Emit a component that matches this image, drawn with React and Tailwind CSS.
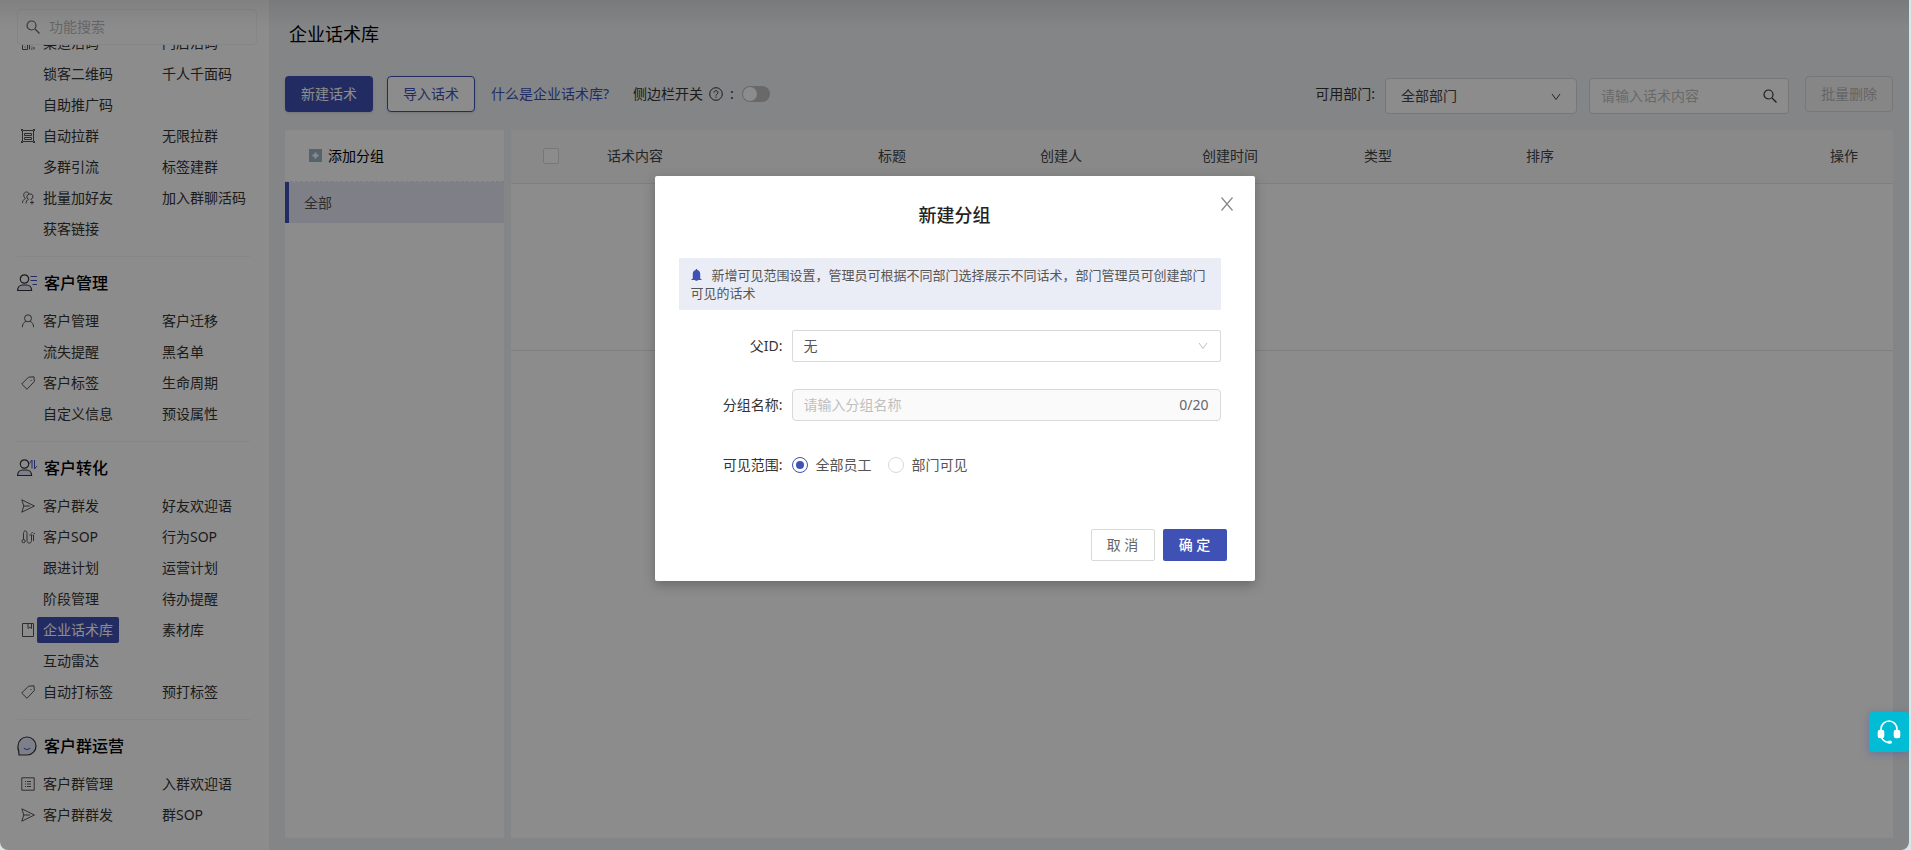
import { useState } from 'react';

// ── Sidebar data: each row is [icon, left link, right link] ──
const SECTIONS = [
  {
    title: null,
    rows: [
      ['qr', '渠道活码', '门店活码'],
      [null, '锁客二维码', '千人千面码'],
      [null, '自助推广码', null],
      ['frame', '自动拉群', '无限拉群'],
      [null, '多群引流', '标签建群'],
      ['addUser', '批量加好友', '加入群聊活码'],
      [null, '获客链接', null],
    ],
  },
  {
    title: '客户管理',
    icon: 'userList',
    rows: [
      ['user', '客户管理', '客户迁移'],
      [null, '流失提醒', '黑名单'],
      ['tag', '客户标签', '生命周期'],
      [null, '自定义信息', '预设属性'],
    ],
  },
  {
    title: '客户转化',
    icon: 'userSwap',
    rows: [
      ['send', '客户群发', '好友欢迎语'],
      ['route', '客户SOP', '行为SOP'],
      [null, '跟进计划', '运营计划'],
      [null, '阶段管理', '待办提醒'],
      ['book', '企业话术库', '素材库'],
      [null, '互动雷达', null],
      ['tag', '自动打标签', '预打标签'],
    ],
  },
  {
    title: '客户群运营',
    icon: 'chat',
    rows: [
      ['list', '客户群管理', '入群欢迎语'],
      ['send', '客户群群发', '群SOP'],
    ],
  },
];

const ACTIVE = '企业话术库';

const ROW_ICONS = {
  qr: <path d="M1.500 1.500h4v4h-4zM8.500 1.500h4v4h-4zM1.500 8.500h5v5h-5zM3.500 11h1M8.500 8v5.500M10.500 8.500h2.500M10.500 11h1M13 11v2.500M10 13h1.500" />,
  frame: <path d="M1.500 1.500h11v11h-11zM0 .5h2M12 .5h2M0 13.500h2M12 13.500h2M.5 0v2M13.500 0v2M.5 12v2M13.500 12v2M3.500 4.500h7v2h-7zM3.500 8.500h7v2h-7z" />,
  addUser: <path d="M4.500 7.500C2 6 2 1 5.500 1 7 1 8 2 8 3M4.500 7.500C2.500 8.500 1.500 10 1.500 12M8.500 3a2.700 2.700 0 0 1 1.500 5.200M8.500 3a2.700 2.700 0 0 0-1 5.200C6 9 5 10.500 5 12.500M10 8.200v.8M11 9.500v4M9 11.500h4" />,
  user: <path d="M7 .8a3.500 3.500 0 1 0 0 7 3.500 3.500 0 0 0 0-7zM5 7.400C2.800 8.200 1.400 10 1.400 13.200M9 7.400c2.200.8 3.600 2.600 3.600 5.800" />,
  tag: <path d="M.7 8 7.500 1.200 13 .8l.3 4.700L6 13.300zM9.500 4.500h1" />,
  send: <path d="M.8.8 13.400 7 .8 13.200 2.800 7zM2.800 7H9" />,
  route: <path d="M2.500 9.500a1.600 1.600 0 1 0 .1 3.200 1.600 1.600 0 0 0 0-3.200zM2.500 9.500v-6c0-3.500 3.500-3.500 3.500 0v7c0 3.500 4.500 3.500 4.500 0V5M8.500 5h3M12.500 5v6M10.500 3.500 11.500 2M12.500 4l1.500-.8" />,
  book: <path d="M1.500.5h11v13h-11zM7 .5v5l1.700-1.300L10.500 5.500v-5" />,
  list: <path d="M.8.800h12.400v12.400H.8zM4 4.500h1M6 4.500h4M4 7h1M6 7h4M4 9.500h1M6 9.500h4" />,
};

function RowIcon({ name }) {
  if (!name) return <span />;
  return (
    <svg className="w-3.5 h-3.5 text-[#555]" viewBox="0 0 14 14" fill="none" stroke="currentColor" aria-hidden="true">
      {ROW_ICONS[name]}
    </svg>
  );
}

function SectionIcon({ name }) {
  return (
    <svg className="w-5 h-5" viewBox="0 0 20 20" fill="none" stroke="#333" strokeWidth="1.200" aria-hidden="true">
      {name === 'chat' ? (
        <>
          <path d="M1 10a9 9 0 1 1 9 9H2l-.3-4A9 9 0 0 1 1 10z" fill="#e4e7fb" />
          <path d="M7 12c1.500 2 4.500 2 6 0" stroke="#3f51b5" />
        </>
      ) : (
        <>
          <circle cx="7.500" cy="6" r="4.200" />
          <path d="M.6 17.500c0-3.500 2.400-5.500 5-5.500h4c2.600 0 5 2 5 5.500z" fill="#e4e7fb" />
          {name === 'userList' ? (
            <path d="M13.500 3.500H20M13.500 7.500H20M15.500 11.500H20" stroke="#3f51b5" />
          ) : (
            <path d="M12.500 5.500 15 2v8.500M17.500 2v9l2.500-3" stroke="#3f51b5" strokeWidth="1" />
          )}
        </>
      )}
    </svg>
  );
}

function SearchIcon({ className }) {
  return (
    <svg className={className} viewBox="0 0 14 14" fill="none" stroke="currentColor" strokeWidth="1.200" aria-hidden="true">
      <circle cx="5.500" cy="5.500" r="4.500" />
      <path d="M9 9l4.500 4.500" />
    </svg>
  );
}

function Chevron({ className }) {
  return (
    <svg className={className} viewBox="0 0 10 10" fill="none" stroke="currentColor" aria-hidden="true">
      <path d="M1 2l4 5.500L9 2" />
    </svg>
  );
}

function NavLink({ label }) {
  if (!label) return <span />;
  return (
    <a
      href="#"
      className={`justify-self-start px-1.5 leading-[26px] rounded-xs whitespace-nowrap ${label === ACTIVE ? 'bg-[#3f51b5] text-white' : 'text-[#333]'}`}
    >
      {label}
    </a>
  );
}

function Sidebar() {
  return (
    <aside className="isolate w-[269px] shrink-0 bg-white flex flex-col overflow-hidden">
      <div className="relative z-10 pt-[9px] pl-[17px] pr-3">
        <label className="flex items-center h-9 px-2 gap-[9px] rounded border border-[#f3f3f3] bg-white text-[#666]">
          <SearchIcon className="w-3.5 h-3.5 shrink-0" />
          <input
            type="text"
            aria-label="功能搜索"
            placeholder="功能搜索"
            className="min-w-0 flex-1 text-sm outline-none placeholder:text-[#bbb]"
          />
        </label>
      </div>

      {/* list is scrolled a little under the search box */}
      <nav className="-mt-[18px] text-sm">
        {SECTIONS.map((s, i) => (
          <div key={i}>
            {s.title && (
              <>
                <div className="ml-[17px] mr-[19px] border-t border-[#f5f5f5]" />
                <h2 className="mt-2.5 mb-1.5 h-8 pl-[17px] flex items-center gap-[7px] text-base font-medium text-black">
                  <SectionIcon name={s.icon} />
                  {s.title}
                </h2>
              </>
            )}
            <div className="pb-3">
              {s.rows.map(([icon, a, b]) => (
                <div key={a} className="grid grid-cols-[16px_119px_1fr] items-center h-[31px] pl-[21px]">
                  <RowIcon name={icon} />
                  <NavLink label={a} />
                  <NavLink label={b} />
                </div>
              ))}
            </div>
          </div>
        ))}
      </nav>
    </aside>
  );
}

function Toolbar() {
  return (
    <div className="flex items-center h-9 text-sm text-[#333]">
      <button className="w-[88px] h-9 rounded bg-[#3f51b5] text-white shadow-sm">新建话术</button>
      <button className="w-[88px] h-9 ml-3.5 rounded bg-white border border-[#3f51b5] text-[#3f51b5] shadow-sm">导入话术</button>
      <a href="#" className="ml-4 text-[#3f51b5]">什么是企业话术库?</a>
      <span className="ml-6">侧边栏开关</span>
      <svg className="w-3.5 h-3.5 ml-1.5" viewBox="0 0 14 14" fill="none" stroke="currentColor" aria-hidden="true">
        <circle cx="7" cy="7" r="6.300" />
        <path d="M5 5.600c0-2.600 4-2.600 4 0C9 7 7 7 7 8.600M7 9.600v1.200" />
      </svg>
      <span className="ml-[7px]">:</span>
      <button role="switch" aria-checked="false" aria-label="侧边栏开关" className="w-7 h-4 ml-2 p-px rounded-full bg-[#bfbfbf]">
        <span className="block w-3.5 h-3.5 rounded-full bg-white" />
      </button>

      <div className="ml-auto flex items-center">
        <label htmlFor="dept">可用部门:</label>
        <div className="relative ml-2.5 mt-1">
          <select id="dept" className="appearance-none w-48 h-9 pl-[15px] rounded bg-white border border-[#d9d9d9] text-[#444]">
            <option>全部部门</option>
          </select>
          <Chevron className="absolute right-4 top-[14px] w-2.5 h-2.5 text-[#444] pointer-events-none" />
        </div>
        <label className="flex items-center w-[200px] h-9 ml-3 mt-1 px-[11px] rounded bg-white border border-[#d9d9d9]">
          <input
            type="text"
            aria-label="请输入话术内容"
            placeholder="请输入话术内容"
            className="min-w-0 flex-1 outline-none placeholder:text-[#bfbfbf]"
          />
          <SearchIcon className="w-3.5 h-3.5" />
        </label>
        <button disabled className="w-[88px] h-9 ml-4 rounded bg-[#f5f5f5] border border-[#d9d9d9] text-[#b8b8b8]">批量删除</button>
      </div>
    </div>
  );
}

function GroupPanel() {
  return (
    <section className="w-[219px] shrink-0 bg-white text-sm">
      <button className="flex items-center w-full h-[52px] pl-6 gap-1.5 border-b border-dashed border-[#e8e8e8] text-black">
        <svg className="w-[13px] h-[13px]" viewBox="0 0 13 13" aria-hidden="true">
          <rect width="13" height="13" fill="#9db4c4" />
          <path d="M6.500 3.500v6M3.500 6.500h6" stroke="#fff" strokeWidth="2" />
        </svg>
        添加分组
      </button>
      <button className="flex items-center w-full h-[41px] pl-[15px] bg-[#e8eaf6] border-l-4 border-[#3f51b5] text-[#555]">全部</button>
    </section>
  );
}

function ScriptTable() {
  return (
    <section className="flex-1 bg-white">
      <table className="w-full table-fixed text-sm text-[#444]">
        <thead>
          <tr className="h-[53px] bg-[#fafafa] border-b border-[#e8e8e8] text-left">
            <th className="w-20 pl-8">
              <input type="checkbox" aria-label="全选" className="block appearance-none w-4 h-4 rounded-xs border border-[#d9d9d9] bg-white" />
            </th>
            <th className="pl-4 font-normal">话术内容</th>
            <th className="w-[162px] pl-4 font-normal">标题</th>
            <th className="w-[162px] pl-4 font-normal">创建人</th>
            <th className="w-[162px] pl-4 font-normal">创建时间</th>
            <th className="w-[162px] pl-4 font-normal">类型</th>
            <th className="w-[162px] pl-4 font-normal">排序</th>
            <th className="w-[221px] pr-[35px] text-right font-normal">操作</th>
          </tr>
        </thead>
        <tbody>
          <tr className="h-[167px] border-b border-[#e8e8e8]">
            <td colSpan={8} />
          </tr>
        </tbody>
      </table>
    </section>
  );
}

function Radio({ label, value, current, onChange }) {
  return (
    <label className="flex items-center gap-2">
      <input
        type="radio"
        name="scope"
        checked={current === value}
        onChange={() => onChange(value)}
        className="appearance-none w-4 h-4 rounded-full border border-[#d9d9d9] checked:border-[#3f51b5] checked:bg-[#3f51b5] bg-clip-content p-[3px]"
      />
      {label}
    </label>
  );
}

function GroupDialog() {
  const [name, setName] = useState('');
  const [scope, setScope] = useState('all');

  return (
    <div role="dialog" aria-label="新建分组" className="relative w-[600px] h-fit mt-44 pb-5 bg-white rounded-xs shadow-[0_4px_12px_rgba(0,0,0,0.25)] text-sm text-[#333]">
      <button aria-label="关闭" className="absolute right-[21px] top-[21px] w-3.5 h-3.5 text-[#888]">
        <svg viewBox="0 0 14 14" fill="none" stroke="currentColor" strokeWidth="1.200">
          <path d="M1.500.5l11 13M12.500.5l-11 13" />
        </svg>
      </button>
      <h1 className="pt-[25px] text-center text-lg leading-7 font-medium text-[#222]">新建分组</h1>

      <div className="ml-6 mr-[34px]">
        {/* notice */}
        <p className="mt-[29px] px-3 py-2 bg-[#eaecf6] text-[13px] leading-[18px] text-[#555]">
          <svg className="inline-block align-[-1px] w-[11px] h-3 mr-2.5" viewBox="0 0 11 12" fill="#3f51b5" aria-hidden="true">
            <path d="M5.500 0c.6 0 .8.500.8 1 2 .5 2.900 2 2.900 4v4.500l1.500 1v.5H.3v-.5l1.500-1V5c0-2 .9-3.500 2.900-4 0-.5.200-1 .8-1zM4.300 11.300h2.400v.7H4.300z" />
          </svg>
          新增可见范围设置，管理员可根据不同部门选择展示不同话术，部门管理员可创建部门可见的话术
        </p>

        <div className="mt-5 flex items-center h-8">
          <label htmlFor="parent" className="w-[104px] text-right">父ID:</label>
          <div className="relative flex-1 ml-[9px]">
            <select id="parent" className="appearance-none block w-full h-8 pl-[11px] bg-white border border-[#d9d9d9] rounded-xs text-[#555]">
              <option>无</option>
            </select>
            <Chevron className="absolute right-3 top-[11px] w-3 h-2.5 text-[#bfbfbf] pointer-events-none" />
          </div>
        </div>

        <div className="mt-[27px] flex items-center h-8">
          <label htmlFor="groupName" className="w-[104px] text-right">分组名称:</label>
          <div className="flex items-center flex-1 h-8 ml-[9px] px-[11px] bg-[#fafafa] border border-[#d9d9d9] rounded">
            <input
              id="groupName"
              type="text"
              maxLength={20}
              value={name}
              onChange={e => setName(e.target.value)}
              placeholder="请输入分组名称"
              className="min-w-0 flex-1 outline-none placeholder:text-[#bfbfbf]"
            />
            <span className="text-[#666]">{name.length}/20</span>
          </div>
        </div>

        <div role="radiogroup" aria-labelledby="scopeLabel" className="mt-7 flex items-center h-8 text-[#555]">
          <span id="scopeLabel" className="w-[104px] mr-[9px] text-right text-[#333]">可见范围:</span>
          <div className="flex gap-4">
            <Radio label="全部员工" value="all" current={scope} onChange={setScope} />
            <Radio label="部门可见" value="dept" current={scope} onChange={setScope} />
          </div>
        </div>
      </div>

      <div className="mt-12 pr-7 flex justify-end gap-2">
        <button className="w-16 h-8 rounded-xs border border-[#d9d9d9] text-[#666]">取 消</button>
        <button className="w-16 h-8 rounded-xs bg-[#3f51b5] text-white font-medium">确 定</button>
      </div>
    </div>
  );
}

export default function App() {
  return (
    <div className="min-h-screen pr-0.5 flex bg-[#d3e8e8] font-['Noto_Sans','Noto_Sans_CJK_SC',sans-serif]">
      <div className="relative flex flex-1 rounded-b-lg overflow-hidden">
        <Sidebar />

        <main className="flex-1 min-w-0 flex flex-col px-4 pb-3 bg-[#f0f2f5]">
          <h1 className="pl-1 pt-5 text-lg leading-7 text-black">企业话术库</h1>
          <div className="mt-7">
            <Toolbar />
          </div>
          <div className="flex flex-1 gap-[7px] mt-[18px]">
            <GroupPanel />
            <ScriptTable />
          </div>
        </main>

        {/* shade below the top edge */}
        <div className="absolute z-10 inset-x-0 top-0 h-7 bg-linear-to-b from-black/8 to-transparent pointer-events-none" />

        {/* modal mask */}
        <div className="absolute inset-0 z-20 flex justify-center bg-black/45">
          <GroupDialog />
        </div>

        <button aria-label="在线客服" className="absolute z-30 right-0 bottom-[98px] w-10 h-10 rounded flex items-center justify-center bg-[#00bcd4] shadow-[0_2px_8px_rgba(63,81,181,0.4)]">
          <svg className="w-6 h-6" viewBox="0 0 24 24" fill="none" stroke="#fff" strokeWidth="1.600" aria-hidden="true">
            <path d="M4 11V9a8 8 0 0 1 16 0v2M4.500 17c1 3 3.500 5 6.500 5.300" />
            <rect x="1.500" y="10.500" width="5" height="7" rx="1.500" fill="#fff" />
            <rect x="17.500" y="10.500" width="5" height="7" rx="1.500" fill="#fff" />
            <ellipse cx="12.500" cy="22.200" rx="1.800" ry=".8" fill="#fff" />
          </svg>
        </button>
      </div>
    </div>
  );
}
